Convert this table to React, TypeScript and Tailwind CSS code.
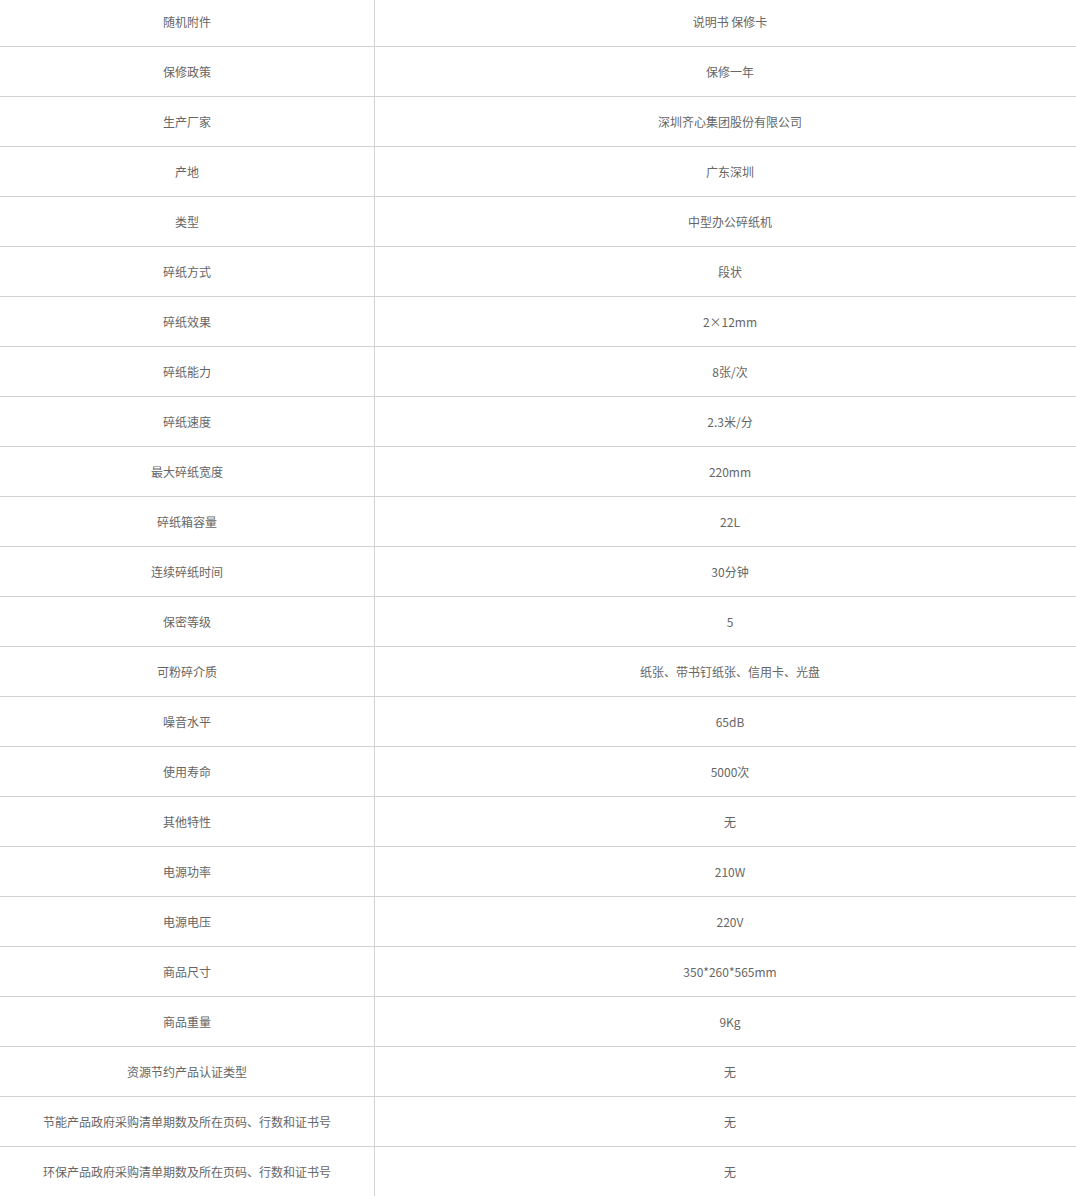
const rows: [string, string][] = [
  ["随机附件", "说明书 保修卡"],
  ["保修政策", "保修一年"],
  ["生产厂家", "深圳齐心集团股份有限公司"],
  ["产地", "广东深圳"],
  ["类型", "中型办公碎纸机"],
  ["碎纸方式", "段状"],
  ["碎纸效果", "2×12mm"],
  ["碎纸能力", "8张/次"],
  ["碎纸速度", "2.3米/分"],
  ["最大碎纸宽度", "220mm"],
  ["碎纸箱容量", "22L"],
  ["连续碎纸时间", "30分钟"],
  ["保密等级", "5"],
  ["可粉碎介质", "纸张、带书钉纸张、信用卡、光盘"],
  ["噪音水平", "65dB"],
  ["使用寿命", "5000次"],
  ["其他特性", "无"],
  ["电源功率", "210W"],
  ["电源电压", "220V"],
  ["商品尺寸", "350*260*565mm"],
  ["商品重量", "9Kg"],
  ["资源节约产品认证类型", "无"],
  ["节能产品政府采购清单期数及所在页码、行数和证书号", "无"],
  ["环保产品政府采购清单期数及所在页码、行数和证书号", "无"],
];

export default function App() {
  return (
    <div
      className="w-[1076px] h-[1196px] overflow-hidden bg-white text-[12px] text-[#666]"
      style={{ fontFamily: '"Microsoft YaHei", "Noto Sans CJK SC", "Noto Sans", sans-serif' }}
    >
      <div className="-mt-[3px] flex flex-col">
        {rows.map(([label, value]) => (
          <div key={label} className="flex h-[50px] border-b border-[#d2d2d2]">
            <div className="w-[375px] shrink-0 border-r border-[#d2d2d2] flex items-center justify-center">
              {label}
            </div>
            <div className="flex-1 pl-[9px] flex items-center justify-center">
              {value}
            </div>
          </div>
        ))}
      </div>
    </div>
  );
}
